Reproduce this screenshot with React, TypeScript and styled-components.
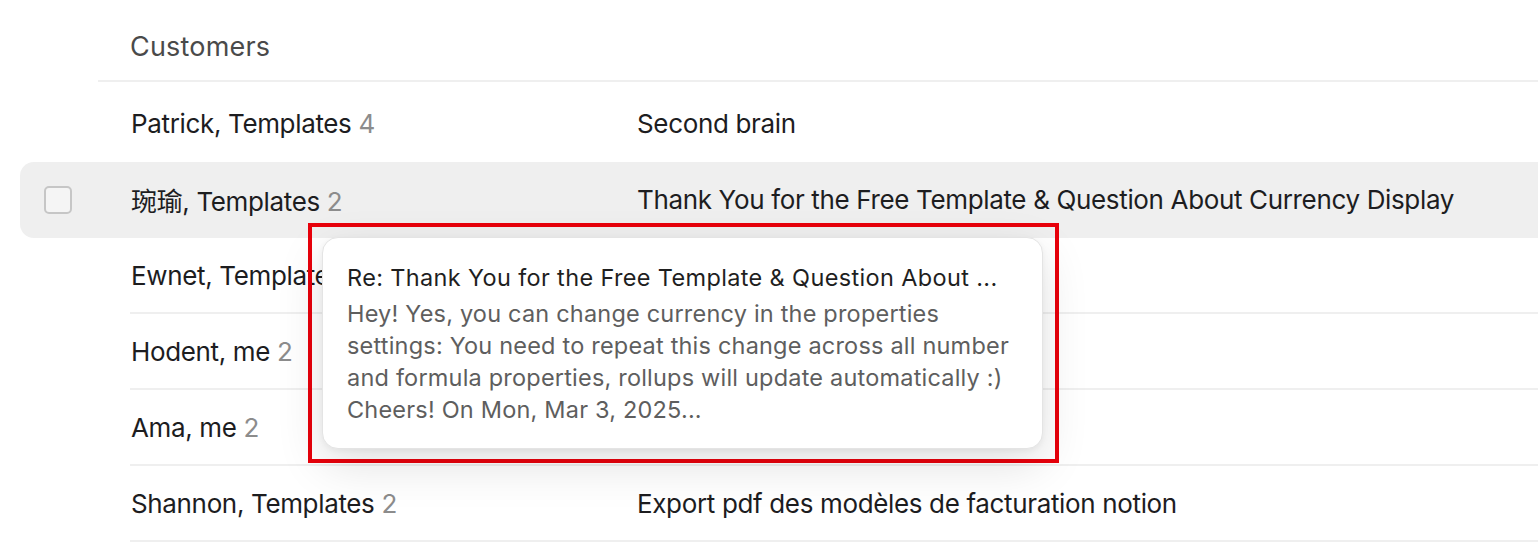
import React from 'react';
import styled, { createGlobalStyle } from "styled-components";

const GlobalStyle = createGlobalStyle`
	html, body {
		margin: 0;
		padding: 0;
		background: #ffffff;
	}
	body {
		font-family: Inter, "Noto Sans CJK SC", "Liberation Sans", sans-serif;
		color: #1d1d1f;
		-webkit-font-smoothing: antialiased;
	}
`;

type Thread = {
	names: string;
	count: number;
	subject: string;
	hovered?: boolean;
};

const threads: Thread[] = [
	{ names: "Patrick, Templates", count: 4, subject: "Second brain" },
	{ names: "琬瑜, Templates", count: 2, subject: "Thank You for the Free Template & Question About Currency Display", hovered: true },
	{ names: "Ewnet, Templates", count: 2, subject: "" },
	{ names: "Hodent, me", count: 2, subject: "" },
	{ names: "Ama, me", count: 2, subject: "" },
	{ names: "Shannon, Templates", count: 2, subject: "Export pdf des modèles de facturation notion" },
];

const previewLines = [
	"Hey! Yes, you can change currency in the properties",
	"settings: You need to repeat this change across all number",
	"and formula properties, rollups will update automatically :)",
	"Cheers! On Mon, Mar 3, 2025...",
];

const App = () => {
	return (
		<Page>
			<GlobalStyle />
			<Header>
				<HeaderTitle>Customers</HeaderTitle>
			</Header>
			<List>
				{threads.map((t, i) => {
					// no divider under the hovered row or the one above it
					const nextHovered = threads[i + 1]?.hovered;
					return (
						<Row key={t.names} $hovered={t.hovered}>
							<CheckCell>{t.hovered && <Checkbox />}</CheckCell>
							<Cells $divider={!t.hovered && !nextHovered}>
								<NameCell>
									{t.names} <Count>{t.count}</Count>
								</NameCell>
								<SubjectCell>{t.subject}</SubjectCell>
							</Cells>
						</Row>
					);
				})}
			</List>
			<Highlight>
				<Preview>
					<PreviewTitle>Re: Thank You for the Free Template &amp; Question About ...</PreviewTitle>
					<PreviewBody>
						{previewLines.map((line) => (
							<PreviewLine key={line}>{line}</PreviewLine>
						))}
					</PreviewBody>
				</Preview>
			</Highlight>
		</Page>
	);
};

const Page = styled.div`
	position: relative;
	width: 1538px;
	height: 548px;
	overflow: hidden;
`;

const Header = styled.div`
	margin-left: 98px;
	height: 82px;
	display: flex;
	align-items: center;
	padding-left: 32px;
	padding-top: 12px;
	box-sizing: border-box;
	border-bottom: 2px solid #efefef;
`;

const HeaderTitle = styled.h2`
	margin: 0;
	font-size: 27px;
	font-weight: 400;
	letter-spacing: 0.2px;
	color: #4a4a4a;
`;

const List = styled.div`
	display: flex;
	flex-direction: column;
	padding-left: 20px;
	margin-top: 4px;
`;

const Row = styled.div<{ $hovered?: boolean }>`
	display: flex;
	height: 76px;
	margin-right: -30px;
	border-radius: 14px;
	background: ${(p) => (p.$hovered ? "#efefef" : "transparent")};
`;

const CheckCell = styled.div`
	width: 110px;
	flex-shrink: 0;
	display: flex;
	align-items: center;
	padding-left: 24px;
	box-sizing: border-box;
`;

const Checkbox = styled.span`
	width: 28px;
	height: 28px;
	box-sizing: border-box;
	border: 2px solid #c6c6c6;
	border-radius: 5px;
	background: #f5f5f5;
`;

const Cells = styled.div<{ $divider?: boolean }>`
	flex: 1;
	display: flex;
	align-items: center;
	border-bottom: 2px solid ${(p) => (p.$divider ? "#efefef" : "transparent")};
	box-sizing: border-box;
	font-size: 26px;
	letter-spacing: -0.35px;
	padding-top: 1px;
`;

const NameCell = styled.div`
	width: 506px;
	flex-shrink: 0;
	padding-left: 1px;
	white-space: nowrap;
`;

const Count = styled.span`
	color: #8c8c8c;
`;

const SubjectCell = styled.div`
	white-space: nowrap;
`;

const Highlight = styled.div`
	position: absolute;
	left: 308px;
	top: 223px;
	border: 4px solid #e8000b;
	padding: 10px 12px 10px 10px;
`;

const Preview = styled.div`
	width: 721px;
	height: 212px;
	box-sizing: border-box;
	background: #ffffff;
	border: 1px solid #e4e4e4;
	border-radius: 16px;
	padding: 24px 24px 22px;
	box-shadow: 0 16px 48px rgba(0, 0, 0, 0.12), 0 2px 6px rgba(0, 0, 0, 0.05);
`;

const PreviewTitle = styled.div`
	font-size: 23.5px;
	line-height: 32px;
	letter-spacing: 0.35px;
	color: #1f1f1f;
	white-space: nowrap;
`;

const PreviewBody = styled.div`
	margin-top: 4px;
	font-size: 23.5px;
	line-height: 32px;
	letter-spacing: 0.2px;
	color: #5e5e5e;
`;

const PreviewLine = styled.div`
	white-space: nowrap;
`;

export default App;
